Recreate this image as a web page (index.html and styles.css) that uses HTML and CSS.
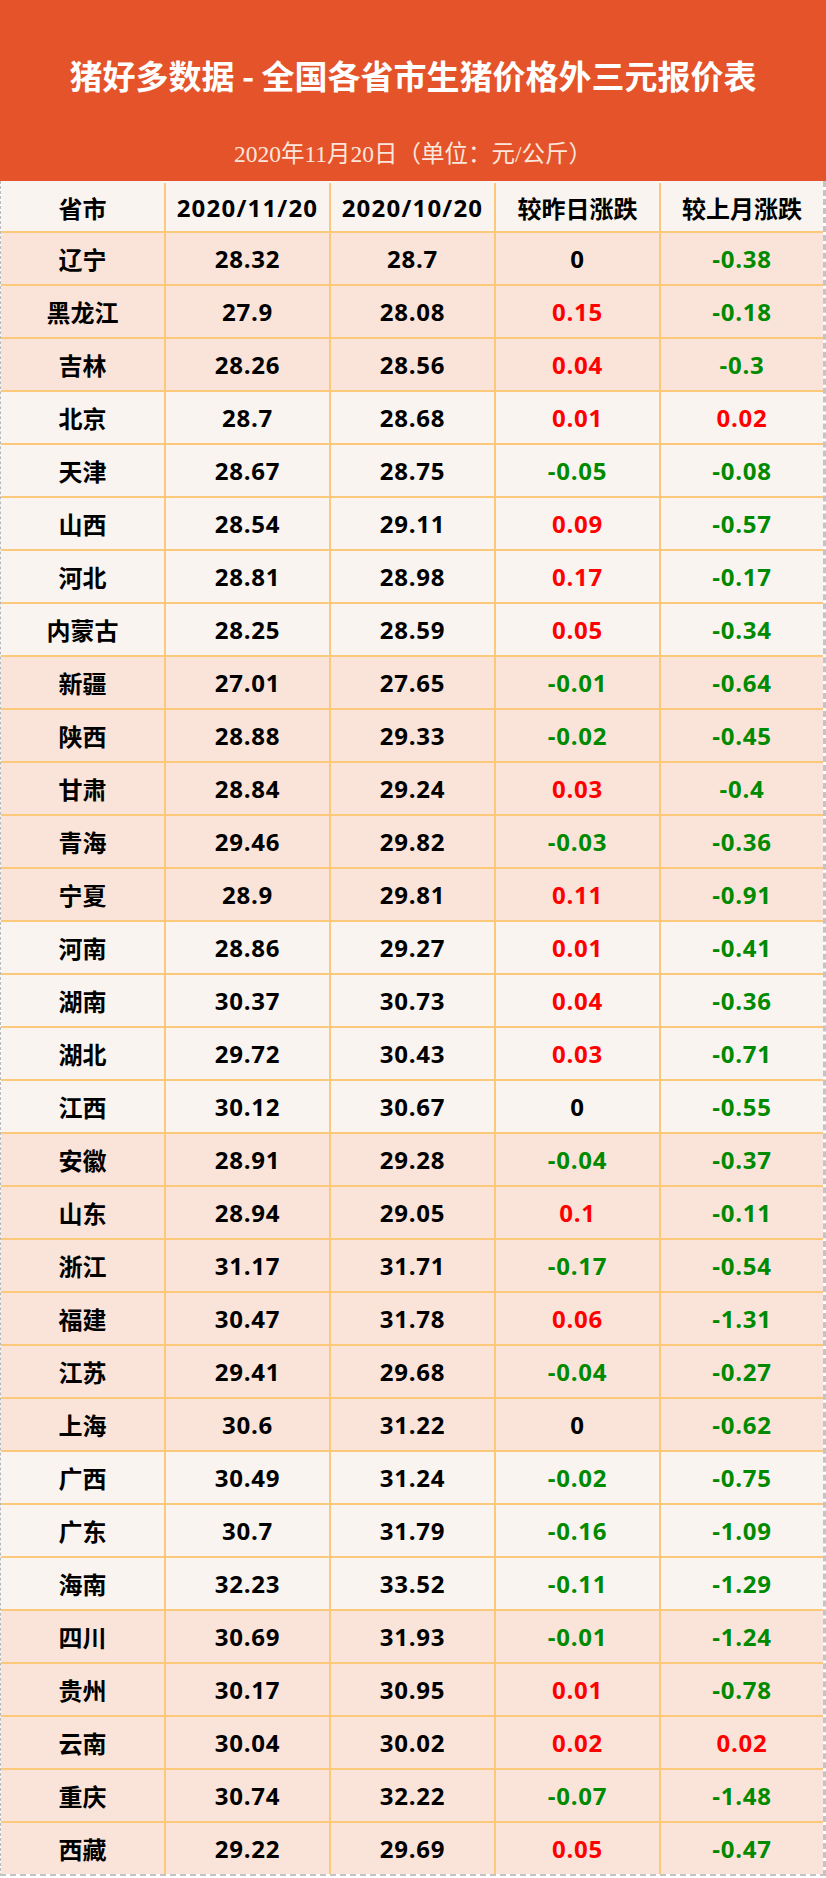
FILE: index.html
```html
<!DOCTYPE html>
<html lang="zh-CN">
<head>
<meta charset="utf-8">
<title>猪好多数据 - 全国各省市生猪价格外三元报价表</title>
<link rel="stylesheet" href="styles.css">
</head>
<body>
<div class="page">
  <header class="banner">
    <h1 class="title">猪好多数据 - 全国各省市生猪价格外三元报价表</h1>
    <p class="subtitle">2020年11月20日（单位：元/公斤）</p>
  </header>
  <div class="table">
    <div class="row head"><div class="cell">省市</div><div class="cell date">2020/11/20</div><div class="cell date">2020/10/20</div><div class="cell">较昨日涨跌</div><div class="cell">较上月涨跌</div></div>
    <div class="row peach"><div class="cell">辽宁</div><div class="cell">28.32</div><div class="cell">28.7</div><div class="cell">0</div><div class="cell down">-0.38</div></div>
    <div class="row peach"><div class="cell">黑龙江</div><div class="cell">27.9</div><div class="cell">28.08</div><div class="cell up">0.15</div><div class="cell down">-0.18</div></div>
    <div class="row peach"><div class="cell">吉林</div><div class="cell">28.26</div><div class="cell">28.56</div><div class="cell up">0.04</div><div class="cell down">-0.3</div></div>
    <div class="row light"><div class="cell">北京</div><div class="cell">28.7</div><div class="cell">28.68</div><div class="cell up">0.01</div><div class="cell up">0.02</div></div>
    <div class="row light"><div class="cell">天津</div><div class="cell">28.67</div><div class="cell">28.75</div><div class="cell down">-0.05</div><div class="cell down">-0.08</div></div>
    <div class="row light"><div class="cell">山西</div><div class="cell">28.54</div><div class="cell">29.11</div><div class="cell up">0.09</div><div class="cell down">-0.57</div></div>
    <div class="row light"><div class="cell">河北</div><div class="cell">28.81</div><div class="cell">28.98</div><div class="cell up">0.17</div><div class="cell down">-0.17</div></div>
    <div class="row light"><div class="cell">内蒙古</div><div class="cell">28.25</div><div class="cell">28.59</div><div class="cell up">0.05</div><div class="cell down">-0.34</div></div>
    <div class="row peach"><div class="cell">新疆</div><div class="cell">27.01</div><div class="cell">27.65</div><div class="cell down">-0.01</div><div class="cell down">-0.64</div></div>
    <div class="row peach"><div class="cell">陕西</div><div class="cell">28.88</div><div class="cell">29.33</div><div class="cell down">-0.02</div><div class="cell down">-0.45</div></div>
    <div class="row peach"><div class="cell">甘肃</div><div class="cell">28.84</div><div class="cell">29.24</div><div class="cell up">0.03</div><div class="cell down">-0.4</div></div>
    <div class="row peach"><div class="cell">青海</div><div class="cell">29.46</div><div class="cell">29.82</div><div class="cell down">-0.03</div><div class="cell down">-0.36</div></div>
    <div class="row peach"><div class="cell">宁夏</div><div class="cell">28.9</div><div class="cell">29.81</div><div class="cell up">0.11</div><div class="cell down">-0.91</div></div>
    <div class="row light"><div class="cell">河南</div><div class="cell">28.86</div><div class="cell">29.27</div><div class="cell up">0.01</div><div class="cell down">-0.41</div></div>
    <div class="row light"><div class="cell">湖南</div><div class="cell">30.37</div><div class="cell">30.73</div><div class="cell up">0.04</div><div class="cell down">-0.36</div></div>
    <div class="row light"><div class="cell">湖北</div><div class="cell">29.72</div><div class="cell">30.43</div><div class="cell up">0.03</div><div class="cell down">-0.71</div></div>
    <div class="row light"><div class="cell">江西</div><div class="cell">30.12</div><div class="cell">30.67</div><div class="cell">0</div><div class="cell down">-0.55</div></div>
    <div class="row peach"><div class="cell">安徽</div><div class="cell">28.91</div><div class="cell">29.28</div><div class="cell down">-0.04</div><div class="cell down">-0.37</div></div>
    <div class="row peach"><div class="cell">山东</div><div class="cell">28.94</div><div class="cell">29.05</div><div class="cell up">0.1</div><div class="cell down">-0.11</div></div>
    <div class="row peach"><div class="cell">浙江</div><div class="cell">31.17</div><div class="cell">31.71</div><div class="cell down">-0.17</div><div class="cell down">-0.54</div></div>
    <div class="row peach"><div class="cell">福建</div><div class="cell">30.47</div><div class="cell">31.78</div><div class="cell up">0.06</div><div class="cell down">-1.31</div></div>
    <div class="row peach"><div class="cell">江苏</div><div class="cell">29.41</div><div class="cell">29.68</div><div class="cell down">-0.04</div><div class="cell down">-0.27</div></div>
    <div class="row peach"><div class="cell">上海</div><div class="cell">30.6</div><div class="cell">31.22</div><div class="cell">0</div><div class="cell down">-0.62</div></div>
    <div class="row light"><div class="cell">广西</div><div class="cell">30.49</div><div class="cell">31.24</div><div class="cell down">-0.02</div><div class="cell down">-0.75</div></div>
    <div class="row light"><div class="cell">广东</div><div class="cell">30.7</div><div class="cell">31.79</div><div class="cell down">-0.16</div><div class="cell down">-1.09</div></div>
    <div class="row light"><div class="cell">海南</div><div class="cell">32.23</div><div class="cell">33.52</div><div class="cell down">-0.11</div><div class="cell down">-1.29</div></div>
    <div class="row peach"><div class="cell">四川</div><div class="cell">30.69</div><div class="cell">31.93</div><div class="cell down">-0.01</div><div class="cell down">-1.24</div></div>
    <div class="row peach"><div class="cell">贵州</div><div class="cell">30.17</div><div class="cell">30.95</div><div class="cell up">0.01</div><div class="cell down">-0.78</div></div>
    <div class="row peach"><div class="cell">云南</div><div class="cell">30.04</div><div class="cell">30.02</div><div class="cell up">0.02</div><div class="cell up">0.02</div></div>
    <div class="row peach"><div class="cell">重庆</div><div class="cell">30.74</div><div class="cell">32.22</div><div class="cell down">-0.07</div><div class="cell down">-1.48</div></div>
    <div class="row peach"><div class="cell">西藏</div><div class="cell">29.22</div><div class="cell">29.69</div><div class="cell up">0.05</div><div class="cell down">-0.47</div></div>
  </div>
</div>
</body>
</html>
```

FILE: styles.css
```css
* { box-sizing: border-box; }
html, body { margin: 0; padding: 0; background: #ffffff; }
.page { width: 826px; }

.banner {
  height: 181px;
  background: #e5532a;
  display: flex;
  flex-direction: column;
  align-items: center;
  padding-top: 55px;
}
.title {
  margin: 0;
  height: 40px;
  line-height: 40px;
  font-family: "Noto Sans CJK SC", sans-serif;
  font-weight: 700;
  font-size: 33px;
  color: #ffffff;
  white-space: nowrap;
}
.subtitle {
  margin: 46px 0 0;
  height: 26px;
  line-height: 26px;
  font-family: "Liberation Serif", "Noto Sans CJK SC", serif;
  font-size: 23.5px;
  color: #fce6dc;
  white-space: nowrap;
}

.table {
  border-left: 1px dashed #b9b9b9;
  border-right: 3px dashed #c4c4c4;
  border-bottom: 2px dashed #c4c4c4;
}
.row {
  display: grid;
  grid-template-columns: 165px 165px 165px 165px 162px;
  height: 53px;
  border-bottom: 2px solid #fcc97b;
}
.row:last-child { border-bottom: none; height: 51px; }
.row.head { height: 52px; background: #f9f4f0; padding-top: 2px; }
.row.peach { background: #fae4d9; }
.row.light { background: #f9f4f0; }

.cell {
  display: flex;
  align-items: center;
  justify-content: center;
  border-right: 2px solid #fcc97b;
  font-family: "Open Sans", "Noto Sans CJK SC", sans-serif;
  font-weight: 700;
  font-size: 24px;
  color: #000000;
  white-space: nowrap;
}
.cell:last-child { border-right: none; }
.row.peach .cell:not(:first-child),
.row.light .cell:not(:first-child) { letter-spacing: 0.8px; }
.cell.date { letter-spacing: 1.2px; }
.cell.up { color: #ff0000; }
.cell.down { color: #008a00; }
```
